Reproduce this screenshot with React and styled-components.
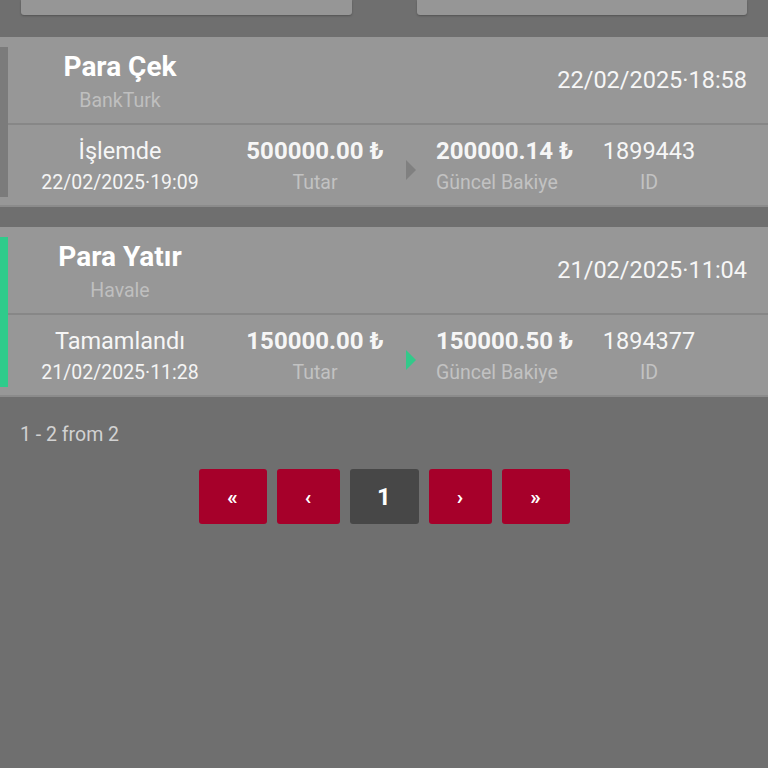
import styled, { createGlobalStyle } from "styled-components";

const GlobalStyle = createGlobalStyle`
  html, body {
    margin: 0;
    padding: 0;
    background: #6f6f6f;
  }
  body {
    font-family: Roboto, "Liberation Sans", sans-serif;
    color: #f4f4f4;
  }
`;

const Page = styled.div`
  width: 768px;
  min-height: 768px;
  background: #6f6f6f;
`;

const TopBar = styled.div`
  display: flex;
  gap: 65px;
  padding: 0 21px;
  height: 37px;
`;

const TopButton = styled.div`
  flex: 1;
  height: 15px;
  background: #969696;
  border-radius: 0 0 3px 3px;
  box-shadow: 0 1px 2px rgba(0, 0, 0, 0.25);
`;

const List = styled.div`
  display: flex;
  flex-direction: column;
  gap: 20px;
`;

const Card = styled.div`
  position: relative;
  background: #979797;
  border-bottom: 2px solid #8b8b8b;

  &::before {
    content: "";
    position: absolute;
    left: 0;
    top: 10px;
    bottom: 8px;
    width: 8px;
    background: ${(p) => p.$stripe};
  }
`;

const Header = styled.div`
  display: grid;
  grid-template-columns: 240px 1fr;
  align-items: center;
  height: 86px;
  border-bottom: 2px solid #878787;
`;

const TitleBlock = styled.div`
  display: flex;
  flex-direction: column;
  align-items: center;
  padding-top: 8px;
`;

const Title = styled.div`
  font-size: 28px;
  font-weight: 700;
  color: #ffffff;
  line-height: 32px;
`;

const Sub = styled.div`
  font-size: 19.5px;
  color: #bfbfbf;
  line-height: 35px;
`;

const HeaderDate = styled.div`
  justify-self: end;
  padding-right: 21px;
  font-size: 23.5px;
  color: #f6f6f6;
`;

const Body = styled.div`
  display: grid;
  grid-template-columns: 240px 150px 40px 150px 138px;
  align-items: center;
  height: 80px;
`;

const Cell = styled.div`
  display: flex;
  flex-direction: column;
  align-items: ${(p) => (p.$left ? "flex-start" : "center")};
  padding-left: ${(p) => (p.$left ? "6px" : "0")};
  padding-top: 6px;
`;

const Main = styled.div`
  font-size: ${(p) => (p.$bold ? "24px" : "23.5px")};
  font-weight: ${(p) => (p.$bold ? 700 : 400)};
  color: #f6f6f6;
  line-height: 30px;
  white-space: nowrap;
`;

const Small = styled.div`
  font-size: 19.5px;
  color: ${(p) => (p.$date ? "#f4f4f4" : "#c2c2c2")};
  line-height: 34px;
  white-space: nowrap;
`;

const Arrow = styled.div`
  justify-self: center;
  width: 0;
  height: 0;
  border-top: 10px solid transparent;
  border-bottom: 10px solid transparent;
  border-left: 10px solid ${(p) => p.$color};
  margin-top: 10px;
  margin-left: 2px;
`;

const Footer = styled.div`
  padding: 26px 20px 0;
`;

const Count = styled.div`
  font-size: 19.5px;
  color: #d2d2d2;
`;

const Pager = styled.div`
  display: flex;
  justify-content: center;
  gap: 10px;
  margin-top: 23px;
`;

const PageButton = styled.div`
  width: ${(p) => p.$w}px;
  height: 55px;
  display: flex;
  align-items: center;
  justify-content: center;
  border-radius: 3px;
  background: ${(p) => (p.$active ? "#474747" : "#a6002a")};
  color: #ffffff;
  font-size: ${(p) => (p.$active ? "24px" : "21px")};
  font-weight: 700;
`;

const rows = [
  {
    title: "Para Çek",
    sub: "BankTurk",
    date: "22/02/2025·18:58",
    status: "İşlemde",
    statusDate: "22/02/2025·19:09",
    amount: "500000.00 ₺",
    balance: "200000.14 ₺",
    id: "1899443",
    stripe: "#7b7b7b",
    arrow: "#808080",
  },
  {
    title: "Para Yatır",
    sub: "Havale",
    date: "21/02/2025·11:04",
    status: "Tamamlandı",
    statusDate: "21/02/2025·11:28",
    amount: "150000.00 ₺",
    balance: "150000.50 ₺",
    id: "1894377",
    stripe: "#2fcb8b",
    arrow: "#33c98a",
  },
];

const pages = [
  { label: "«", w: 68 },
  { label: "‹", w: 63 },
  { label: "1", w: 69, active: true },
  { label: "›", w: 63 },
  { label: "»", w: 68 },
];

export default function App() {
  return (
    <Page>
      <GlobalStyle />
      <TopBar>
        <TopButton />
        <TopButton />
      </TopBar>
      <List>
        {rows.map((r) => (
          <Card key={r.id} $stripe={r.stripe}>
            <Header>
              <TitleBlock>
                <Title>{r.title}</Title>
                <Sub>{r.sub}</Sub>
              </TitleBlock>
              <HeaderDate>{r.date}</HeaderDate>
            </Header>
            <Body>
              <Cell>
                <Main>{r.status}</Main>
                <Small $date>{r.statusDate}</Small>
              </Cell>
              <Cell>
                <Main $bold>{r.amount}</Main>
                <Small>Tutar</Small>
              </Cell>
              <Arrow $color={r.arrow} />
              <Cell $left>
                <Main $bold>{r.balance}</Main>
                <Small>Güncel Bakiye</Small>
              </Cell>
              <Cell>
                <Main>{r.id}</Main>
                <Small>ID</Small>
              </Cell>
            </Body>
          </Card>
        ))}
      </List>
      <Footer>
        <Count>1 - 2 from 2</Count>
        <Pager>
          {pages.map((p) => (
            <PageButton key={p.label} $w={p.w} $active={p.active}>
              {p.label}
            </PageButton>
          ))}
        </Pager>
      </Footer>
    </Page>
  );
}
